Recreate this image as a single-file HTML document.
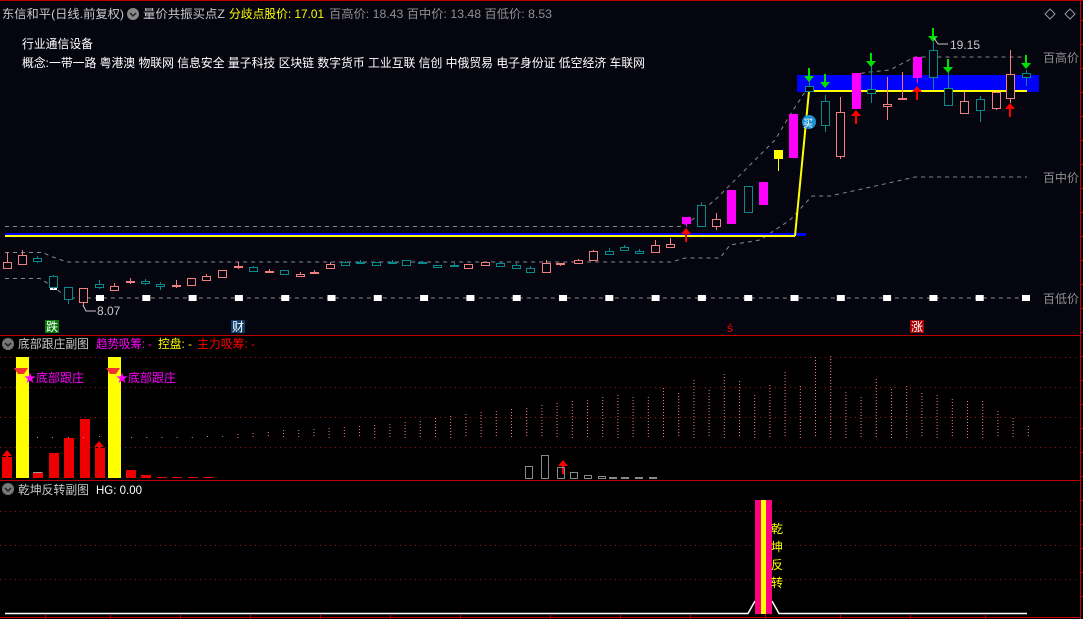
<!DOCTYPE html>
<html><head><meta charset="utf-8"><style>
html,body{margin:0;padding:0;background:#000;}
body{width:1083px;height:619px;overflow:hidden;position:relative;font-family:"Liberation Sans","Noto Sans CJK SC",sans-serif;}
svg{position:absolute;left:0;top:0;}
text{font-family:"Liberation Sans","Noto Sans CJK SC",sans-serif;}
</style></head><body>
<svg id="s" width="1083" height="619" xmlns="http://www.w3.org/2000/svg">
<rect x="0" y="0" width="1083" height="335" fill="#05050f"/>
<rect x="0" y="336" width="1083" height="283" fill="#000"/>
<line x1="0" y1="0.5" x2="1083" y2="0.5" stroke="#b00" />
<line x1="0" y1="335.5" x2="1080" y2="335.5" stroke="#c00000"/>
<line x1="0" y1="480.5" x2="1080" y2="480.5" stroke="#c00000"/>
<line x1="0" y1="617.5" x2="1080" y2="617.5" stroke="#c00000"/>
<line x1="1080.5" y1="0" x2="1080.5" y2="619" stroke="#c00000"/>
<g id="g"></g>
<text x="2" y="18" font-size="12" fill="#c8c8c8" textLength="122" lengthAdjust="spacingAndGlyphs">东信和平(日线.前复权)</text>
<circle cx="133" cy="14" r="6" fill="#888"/><path d="M130 13 l3 3 l3 -3" stroke="#222" stroke-width="1.5" fill="none"/>
<text x="143" y="18" font-size="12" fill="#c8c8c8" textLength="82" lengthAdjust="spacingAndGlyphs">量价共振买点Z</text>
<text x="229" y="18" font-size="12" fill="#ffff00" textLength="95" lengthAdjust="spacingAndGlyphs">分歧点股价: 17.01</text>
<text x="329" y="18" font-size="12" fill="#909090" textLength="223" lengthAdjust="spacingAndGlyphs">百高价: 18.43 百中价: 13.48 百低价: 8.53</text>
<text x="22" y="48" font-size="12" fill="#fff" textLength="71" lengthAdjust="spacingAndGlyphs">行业通信设备</text>
<text x="22" y="67" font-size="12" fill="#fff" textLength="623" lengthAdjust="spacingAndGlyphs">概念:一带一路 粤港澳 物联网 信息安全 量子科技 区块链 数字货币 工业互联 信创 中俄贸易 电子身份证 低空经济 车联网</text>
<path d="M1050 9 l5 5 l-5 5 l-5 -5z M1070 9 l5 5 l-5 5 l-5 -5z" stroke="#999" fill="none"/>
<text x="1043" y="62" font-size="12" fill="#909090">百高价</text>
<text x="1043" y="182" font-size="12" fill="#909090">百中价</text>
<text x="1043" y="303" font-size="12" fill="#909090">百低价</text>
<text x="97" y="315" font-size="12" fill="#c8c8c8">8.07</text>
<path d="M83 305 l3 6 h10" stroke="#c8c8c8" fill="none"/>
<text x="950" y="49" font-size="12" fill="#c8c8c8">19.15</text>
<path d="M934 38 l4 6 h10" stroke="#c8c8c8" fill="none"/>
<rect x="45" y="320" width="14" height="13" fill="#0a7a0a"/><text x="46" y="331" font-size="12" fill="#fff">跌</text>
<rect x="231" y="320" width="14" height="13" fill="#0d3a66"/><text x="232" y="331" font-size="12" fill="#fff">财</text>
<text x="727" y="332" font-size="12" fill="#f00">ś</text>
<rect x="910" y="320" width="14" height="13" fill="#a00"/><text x="911" y="331" font-size="12" fill="#fff">涨</text>
<circle cx="8" cy="344" r="6" fill="#777"/><path d="M5 343 l3 3 l3 -3" stroke="#222" stroke-width="1.5" fill="none"/>
<text x="18" y="348" font-size="12" fill="#c8c8c8" textLength="71" lengthAdjust="spacingAndGlyphs">底部跟庄副图</text>
<text x="96" y="348" font-size="12" fill="#ff00ff" textLength="56" lengthAdjust="spacingAndGlyphs">趋势吸筹: -</text>
<text x="158" y="348" font-size="12" fill="#ffff00" textLength="34" lengthAdjust="spacingAndGlyphs">控盘: -</text>
<text x="197" y="348" font-size="12" fill="#ff0000" textLength="58" lengthAdjust="spacingAndGlyphs">主力吸筹: -</text>
<circle cx="8" cy="489" r="6" fill="#777"/><path d="M5 488 l3 3 l3 -3" stroke="#222" stroke-width="1.5" fill="none"/>
<text x="18" y="494" font-size="12" fill="#c8c8c8" textLength="71" lengthAdjust="spacingAndGlyphs">乾坤反转副图</text>
<text x="96" y="494" font-size="12" fill="#fff" textLength="46" lengthAdjust="spacingAndGlyphs">HG: 0.00</text>
<rect x="16" y="357" width="13" height="121" fill="#ffff00"/>
<rect x="108" y="357" width="13" height="121" fill="#ffff00"/>
<path d="M14 368 h14 l-4 6 h-6z" fill="#e33"/><path d="M106 368 h14 l-4 6 h-6z" fill="#e33"/>
<text x="24" y="382" font-size="12" fill="#ff00ff" textLength="60" lengthAdjust="spacingAndGlyphs">★底部跟庄</text>
<text x="116" y="382" font-size="12" fill="#ff00ff" textLength="60" lengthAdjust="spacingAndGlyphs">★底部跟庄</text>
<rect x="755" y="500" width="17" height="114" fill="#ff0080"/>
<rect x="761" y="500" width="5" height="114" fill="#ffff00"/>
<text x="771" y="533" font-size="12" fill="#ffff00">乾</text>
<text x="771" y="551" font-size="12" fill="#ffff00">坤</text>
<text x="771" y="569" font-size="12" fill="#ffff00">反</text>
<text x="771" y="587" font-size="12" fill="#ffff00">转</text>
</svg>
<script>
var g=document.getElementById('g'),h='';
function L(x1,y1,x2,y2,c,w,d){h+='<line x1="'+x1+'" y1="'+y1+'" x2="'+x2+'" y2="'+y2+'" stroke="'+c+'" stroke-width="'+(w||1)+'"'+(d?' stroke-dasharray="'+d+'"':'')+'/>';}
function R(x,y,w,hh,f,s){h+='<rect x="'+x+'" y="'+y+'" width="'+w+'" height="'+hh+'" fill="'+(f||'none')+'"'+(s?' stroke="'+s+'"':'')+'/>';}
function P(d,c,f,w,da){h+='<path d="'+d+'" stroke="'+(c||'none')+'" fill="'+(f||'none')+'" stroke-width="'+(w||1)+'"'+(da?' stroke-dasharray="'+da+'"':'')+'/>';}
[357,387,417,447].forEach(function(y){L(0,y+.5,1080,y+.5,'#a01010',1,'1 4');});
[511,545,579].forEach(function(y){L(0,y+.5,1080,y+.5,'#a01010',1,'1 4');});
P('M5 226.5 H680 L690 222 L700 212 L715 200 L730 185 L745 170 L760 155 L775 140 L790 115 L805 92 L820 88 L850 75 L870 72 L890 70 L905 62 L915 57 H1027','#888','none',1,'4 4');
P('M5 252.5 H43 L50 256 L67 262 H672 L685 258 H720 L730 245 L760 240 L790 220 L812 196 H830 L880 185 L915 177 H1027','#888','none',1,'4 4');
P('M5 278.5 H40 L55 288 L68 298 H1027','#888','none',1,'4 4');
for(var i=0;i<21;i++){var x=100+i*46.3;R(x-4,295,8,6,'#fff');}
R(50,284,7,6,'#fff');
R(797,75,242,17,'#0000ff');
R(5,233,801,3,'#0000ff');L(5,236,795,236,'#ffff00',2);
P('M795 236 L809 91 H1027','#ffff00','none',2);
var C=[[7,262,268,252,269,'r'],[22,255,264,250,264,'r'],[37,258,261,256,263,'c'],[53,276,287,275,289,'c'],[68,287,299,287,304,'c'],[83,288,302,288,307,'r'],[99,284,287,280,289,'c'],[114,286,290,283,291,'r'],[130,281,283,278,284,'R'],[145,281,283,279,285,'c'],[160,284,286,282,290,'c'],[176,285,286,280,288,'R'],[191,278,285,278,285,'r'],[206,276,280,274,281,'r'],[222,270,277,270,277,'r'],[238,266,268,262,269,'R'],[253,267,271,266,272,'c'],[269,271,272,269,273,'R'],[284,270,274,270,274,'c'],[300,274,276,272,277,'r'],[314,272,273,270,273,'R'],[330,264,268,262,268,'r'],[345,262,265,261,266,'c'],[360,262,263,260,264,'c'],[376,262,265,262,265,'c'],[392,262,263,260,264,'c'],[406,260,265,260,265,'c'],[422,262,263,261,264,'c'],[437,265,267,265,268,'c'],[454,265,266,263,266,'c'],[468,264,268,264,269,'r'],[485,262,265,262,265,'r'],[500,263,266,262,267,'c'],[516,265,268,263,268,'c'],[530,268,272,266,272,'c'],[546,263,272,260,272,'r'],[560,263,265,263,266,'R'],[578,260,263,259,264,'r'],[593,251,260,250,260,'r'],[609,251,254,248,254,'c'],[624,247,250,245,250,'c'],[639,251,253,249,253,'c'],[655,245,252,240,252,'r'],[670,244,247,238,248,'r'],
[686,217,224,217,227,'m'],[701,205,226,202,227,'c'],[716,219,226,213,230,'r'],[731,190,224,190,224,'m'],[748,186,212,186,212,'c'],[763,182,205,182,205,'m'],[778,150,159,150,171,'y'],[793,114,158,114,158,'m'],[809,86,91,80,92,'c'],[825,101,125,95,132,'c'],[840,112,156,97,159,'r'],[856,73,109,73,109,'m'],[871,89,93,53,103,'c'],[887,104,106,77,120,'r'],[902,98,99,72,100,'r'],[917,57,78,57,83,'m'],[933,50,77,42,90,'c'],[948,88,105,70,105,'c'],[964,101,113,92,113,'r'],[980,99,110,96,122,'c'],[996,92,108,92,110,'r'],[1010,74,98,50,103,'r'],[1026,73,77,70,86,'c']];
C.forEach(function(c){var x=c[0],t=c[1],b=c[2],col={r:'#f08080',R:'#f08080',c:'#0a8a8a',m:'#ff00ff',y:'#ffff00'}[c[5]];
 L(x+.5,c[3],x+.5,c[4],col);
 if(c[5]=='m'||c[5]=='y'||c[5]=='R')R(x-4,t,9,Math.max(b-t,2),col);else R(x-3.5,t+.5,8,Math.max(b-t,1),'#05050f',col);
});
function dn(x,y){P('M'+(x-5)+' '+(y-4)+' h10 l-5 6z M'+(x-1)+' '+(y-12)+' h2 v8 h-2z','none','#00e000');}
function up(x,y,c){P('M'+(x-5)+' '+(y+4)+' h10 l-5 -6z M'+(x-1)+' '+(y+4)+' h2 v8 h-2z','none',c||'#ff0000');}
[[809,80],[825,86],[871,65],[933,40],[948,71],[1026,67]].forEach(function(a){dn(a[0],a[1]);});
[[686,230],[856,112],[917,88],[1010,105],[563,462],[7,452],[99,443]].forEach(function(a){up(a[0],a[1]);});
h+='<circle cx="809" cy="122" r="7" fill="#1a90d0"/><text x="803" y="127" font-size="10" fill="#fff">买</text>';
[[2,457],[33,472],[49,453],[64,438],[80,419],[95,448],[126,470],[141,475],[157,477],[172,477],[188,477],[203,477]].forEach(function(b){R(b[0],b[1],10,478-b[1],'#ee0000');});
R(33,472,9,1,'#999');
[[525,466],[541,455],[557,467],[570,472],[584,475],[598,476],[609,477],[621,477],[635,477],[649,477],[663,478],[677,478],[691,478],[705,478],[719,478],[733,478],[747,478],[761,478],[775,478],[789,478],[803,478],[815,478]].forEach(function(b){R(b[0]+.5,b[1]+.5,7,478-b[1],'none','#888');});
var hv=[437,437,437,437,437,436,436,434,433,432,430,430,429,428,427,426,425,424,422,421,418,416,414,412,411,409,408,405,403,401,400,397,395,397,397,388,393,380,390,374,381,395,385,372,386,357,356,392,397,379,389,386,393,395,399,401,401,411,418,426,430,428,429,430,430];
for(var i=0;i<hv.length;i++){var x=131+i*15.2;if(x>1028)break;L(x+.5,hv[i],x+.5,438,'#f08080',1,'1 2');}
[[19,437],[37,437],[52,437],[68,437],[83,437],[99,436]].forEach(function(a){R(a[0],a[1],1,1,'#f08080');});
P('M5 613.5 H748 L755 601 M772 601 L779 613.5 H1027','#fff','none',1.5);
[45,110,180,250,320,390,460,550,620,690,765,840,910,985].forEach(function(x){L(x+.5,614,x+.5,619,'#c00000');});
for(var y=20;y<619;y+=24)L(1080,y+.5,1083,y+.5,'#c00000');
g.innerHTML=h;
</script>
</body></html>
